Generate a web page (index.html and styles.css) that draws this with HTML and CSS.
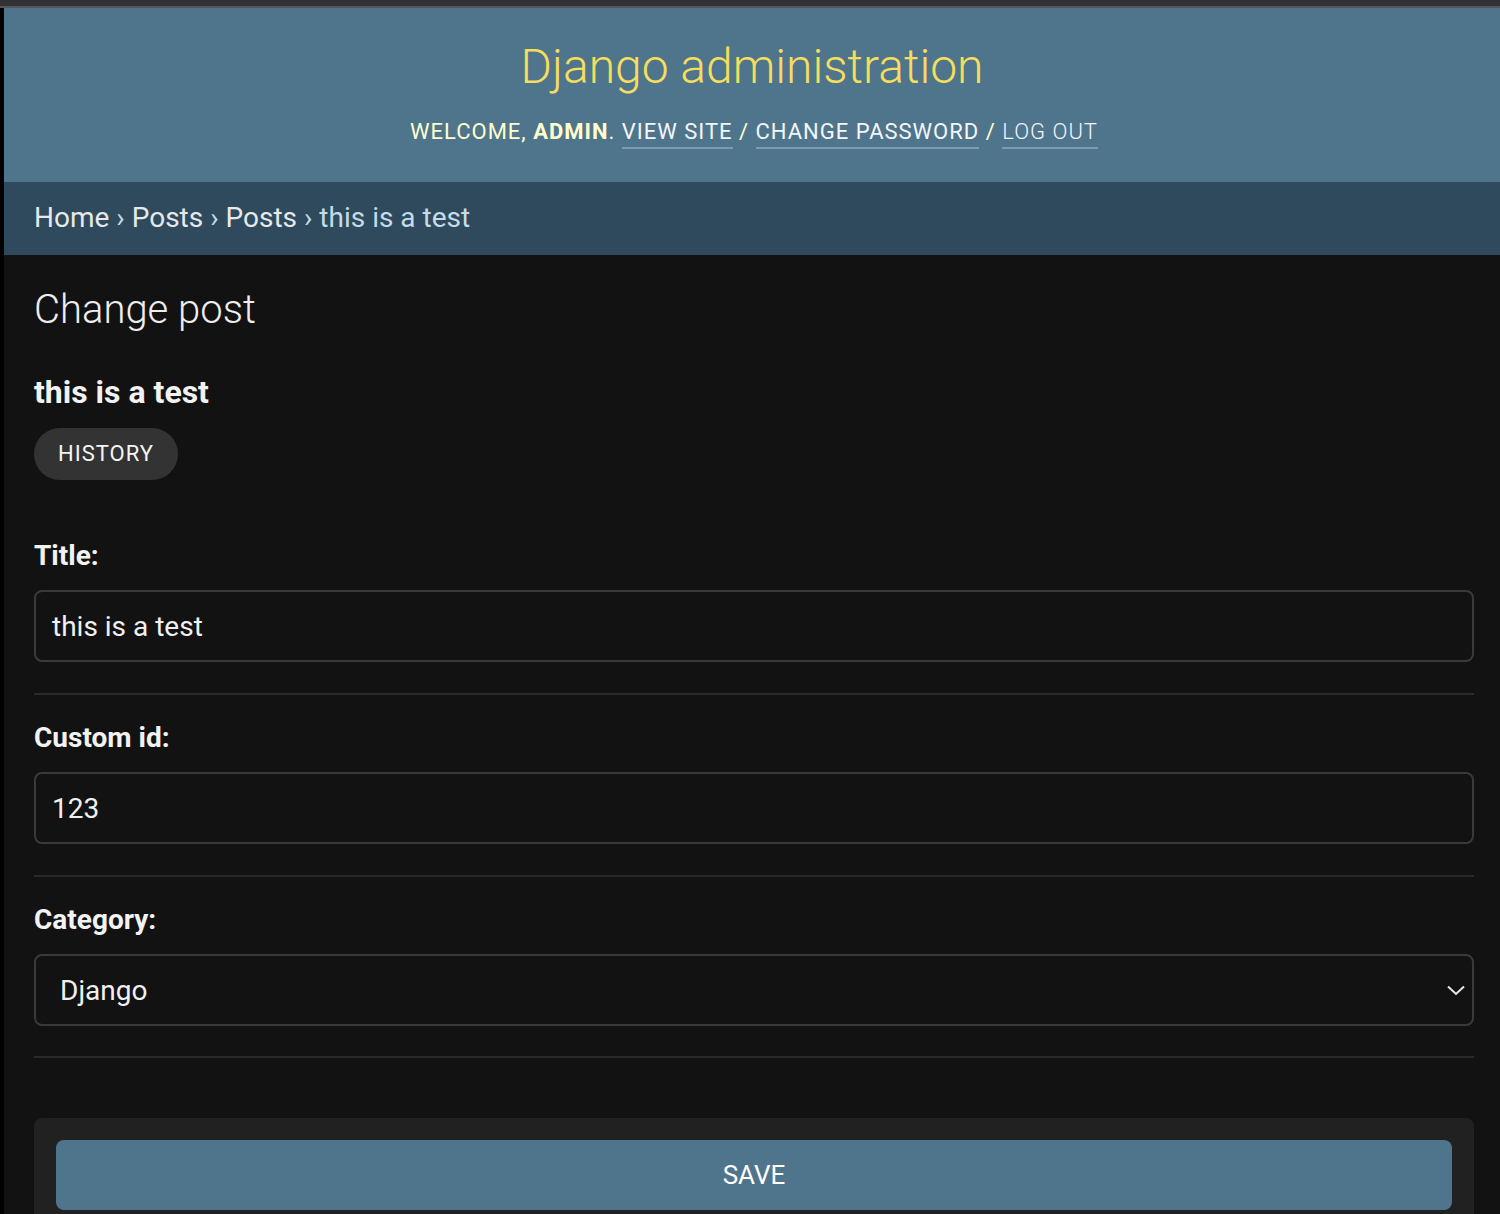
FILE: index.html
```html
<!DOCTYPE html>
<html lang="en">
<head>
<meta charset="utf-8">
<title>Change post | Django site admin</title>
<link rel="stylesheet" href="styles.css">
</head>
<body>
<div class="topbar"></div>
<div class="page">
  <header class="header">
    <div class="branding"><h1 class="site-name">Django administration</h1></div>
    <div class="user-tools">
      WELCOME, <strong>ADMIN</strong>.
      <a href="#" class="ut-link">VIEW SITE</a> /
      <a href="#" class="ut-link">CHANGE PASSWORD</a> /
      <a href="#" class="ut-link ut-logout">LOG OUT</a>
    </div>
  </header>
  <nav class="breadcrumbs">
    <a href="#">Home</a> › <a href="#">Posts</a> › <a href="#">Posts</a> › this is a test
  </nav>
  <main class="content">
    <h1 class="page-title">Change post</h1>
    <h2 class="obj-title">this is a test</h2>
    <div class="tools"><a href="#" class="history">HISTORY</a></div>
    <form class="form">
      <div class="form-row">
        <label class="label">Title:</label>
        <div class="field">this is a test</div>
      </div>
      <div class="form-row">
        <label class="label">Custom id:</label>
        <div class="field">123</div>
      </div>
      <div class="form-row">
        <label class="label">Category:</label>
        <div class="field select">
          <span class="select-text">Django</span>
          <svg class="chevron" width="20" height="12" viewBox="0 0 20 12"><path d="M2 2.5 L10 10 L18 2.5" fill="none" stroke="#e8e8e8" stroke-width="2"/></svg>
        </div>
      </div>
      <div class="submit-row">
        <button type="button" class="save">SAVE</button>
      </div>
    </form>
  </main>
</div>
</body>
</html>
```
FILE: styles.css
```css
html, body {
  margin: 0;
  padding: 0;
}
body {
  background: #121212;
  font-family: Roboto, "Noto Sans", sans-serif;
  color: #eeeeee;
  height: 1214px;
  overflow: hidden;
}
.topbar {
  height: 6px;
  background: #323236;
  border-bottom: 2px solid #56575b;
}
.page {
  border-left: 4px solid #000;
  min-height: 1206px;
  box-sizing: border-box;
}
.header {
  background: #4f758c;
  height: 174px;
  box-sizing: border-box;
  padding-top: 31px;
  display: flex;
  flex-direction: column;
  align-items: center;
}
.site-name {
  margin: 0;
  font-weight: 300;
  font-size: 48px;
  line-height: 56px;
  color: #f5dd5d;
}
.user-tools {
  margin-top: 23px;
  margin-left: 4px;
  font-size: 22px;
  letter-spacing: 1px;
  color: #ffffcc;
  line-height: 28px;
}
.user-tools strong {
  font-weight: 700;
}
.ut-link {
  color: #f4f6f8;
  text-decoration: none;
  border-bottom: 2px solid rgba(255,255,255,0.28);
  padding-bottom: 3px;
}
.ut-logout {
  font-weight: 300;
}
.breadcrumbs {
  background: #2e4a5c;
  height: 73px;
  box-sizing: border-box;
  padding: 19px 30px 0;
  font-size: 28px;
  line-height: 34px;
  color: #c4dce8;
}
.breadcrumbs a {
  color: #e6e8ea;
  text-decoration: none;
}
.content {
  padding: 31px 26px 0 30px;
}
.page-title {
  margin: 0;
  font-weight: 300;
  font-size: 40px;
  line-height: 48px;
  color: #eeeeee;
}
.obj-title {
  margin: 39px 0 0;
  font-size: 32px;
  line-height: 38px;
  font-weight: 700;
  color: #f2f2f2;
}
.tools {
  margin-top: 17px;
}
.history {
  display: inline-block;
  height: 52px;
  line-height: 52px;
  padding: 0 24px;
  border-radius: 26px;
  background: #333333;
  color: #f5f5f5;
  text-decoration: none;
  font-size: 22px;
  letter-spacing: 1px;
}
.form {
  margin-top: 58px;
}
.form-row {
  border-bottom: 2px solid #2a2a2a;
  padding-bottom: 31px;
  margin-bottom: 25px;
}
.form-row:nth-child(3) {
  padding-bottom: 30px;
}
.label {
  display: block;
  font-weight: 700;
  font-size: 28px;
  line-height: 36px;
  color: #f2f2f2;
  margin-bottom: 16px;
}
.field {
  height: 72px;
  box-sizing: border-box;
  border: 2px solid #3a3a3a;
  border-radius: 8px;
  padding: 0 16px;
  font-size: 28px;
  display: flex;
  align-items: center;
  color: #f0f0f0;
}
.select {
  justify-content: space-between;
  padding: 0 6px 0 24px;
}
.chevron {
  display: block;
}
.submit-row {
  margin-top: 60px;
  background: #212121;
  border-radius: 8px;
  padding: 22px 22px;
}
.save {
  display: block;
  width: 100%;
  height: 70px;
  border: none;
  border-radius: 8px;
  background: #4f758c;
  color: #ffffff;
  font-family: Roboto, "Noto Sans", sans-serif;
  font-size: 26px;
}
```
